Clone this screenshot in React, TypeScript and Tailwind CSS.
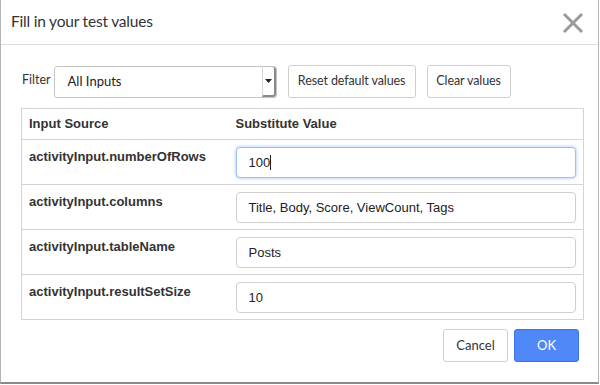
import React from 'react';

interface InputRowProps {
  name: string;
  value: string;
  focused?: boolean;
}

const InputRow: React.FC<InputRowProps> = ({ name, value, focused }) => (
  <tr className="border-t border-[#d4d4d4] h-[45px] align-top">
    <td className="pl-[7px] pt-[7px] text-[13px] font-bold text-[#333]">{name}</td>
    <td className="pl-[7px] pr-[7px] pt-[7px]">
      <div
        className={`h-[31px] rounded-[4px] border bg-white pl-[12px] flex items-center text-[13px] text-[#222] ${
          focused ? 'border-[#9ec1ee] shadow-[0_0_3px_1px_rgba(120,170,240,0.45)]' : 'border-[#cfcfcf]'
        }`}
      >
        {value}
        {focused && <span className="inline-block w-px h-[15px] bg-[#222]" />}
      </div>
    </td>
  </tr>
);

export default function App() {
  return (
    <div className="w-[600px] h-[385px] bg-white font-['Liberation_Sans',sans-serif]">
      <div className="w-[599px] h-[384px] border-l border-r border-b-2 border-l-[#b5b5b5] border-r-[#b5b5b5] border-b-[#8a8a8a] flex flex-col">
        <div className="h-[45px] border-b border-[#dcdcdc] flex items-center justify-between pl-[10px] pr-[14px] shrink-0">
          <h2 className="font-['Lato',sans-serif] text-[15.5px] tracking-[-0.2px] text-[#333] font-normal">Fill in your test values</h2>
          <svg width="22" height="22" viewBox="0 0 22 22" className="mt-[1px]">
            <path d="M2 2 L20 20 M20 2 L2 20" stroke="#9a9a9a" strokeWidth="3" />
          </svg>
        </div>

        <div className="pl-[20px] pr-[15px]">
          <div className="flex items-center mt-[20px] h-[33px]">
            <span className="font-['Lato',sans-serif] text-[12.5px] text-[#333] ml-[1px] mb-[2px]">Filter</span>
            <div className="ml-[3px] w-[223px] h-[32px] rounded-[3px] border border-[#c4c4c4] flex items-center">
              <span className="font-['Lato',sans-serif] text-[13px] text-[#222] pl-[13px] flex-1">All Inputs</span>
              <div className="w-[14px] h-full border-l border-[#d8d8d8] border-r-2 border-b-2 border-r-[#8a8a8a] border-b-[#8a8a8a] rounded-r-[3px] flex items-center justify-center">
                <svg width="7" height="4" viewBox="0 0 7 4">
                  <path d="M0 0 L7 0 L3.5 4 Z" fill="#222" />
                </svg>
              </div>
            </div>
            <button className="ml-[11px] w-[128px] h-[33px] rounded-[3px] border border-[#cfcfcf] bg-white font-['Lato',sans-serif] text-[12.5px] tracking-[-0.1px] text-[#333]">
              Reset default values
            </button>
            <button className="ml-[11px] w-[84px] h-[33px] rounded-[3px] border border-[#cfcfcf] bg-white font-['Lato',sans-serif] text-[12.5px] tracking-[-0.1px] text-[#333]">
              Clear values
            </button>
          </div>

          <table className="mt-[10px] w-[563px] border border-[#d4d4d4] border-collapse">
            <thead>
              <tr className="h-[31px]">
                <th className="w-[207px] pl-[7px] text-left text-[13px] font-bold text-[#333]">Input Source</th>
                <th className="pl-[7px] text-left text-[13px] font-bold text-[#333]">Substitute Value</th>
              </tr>
            </thead>
            <tbody>
              <InputRow name="activityInput.numberOfRows" value="100" focused />
              <InputRow name="activityInput.columns" value="Title, Body, Score, ViewCount, Tags" />
              <InputRow name="activityInput.tableName" value="Posts" />
              <InputRow name="activityInput.resultSetSize" value="10" />
            </tbody>
          </table>
        </div>

        <div className="flex justify-end gap-[6px] mt-[9px] pr-[19px]">
          <button className="w-[65px] h-[33px] rounded-[3px] border border-[#cfcfcf] bg-white font-['Lato',sans-serif] text-[13px] text-[#333]">
            Cancel
          </button>
          <button className="w-[65px] h-[33px] rounded-[3px] border border-[#3b73e6] bg-[#5088f8] font-['Lato',sans-serif] text-[13px] text-white">
            OK
          </button>
        </div>
      </div>
    </div>
  );
}
